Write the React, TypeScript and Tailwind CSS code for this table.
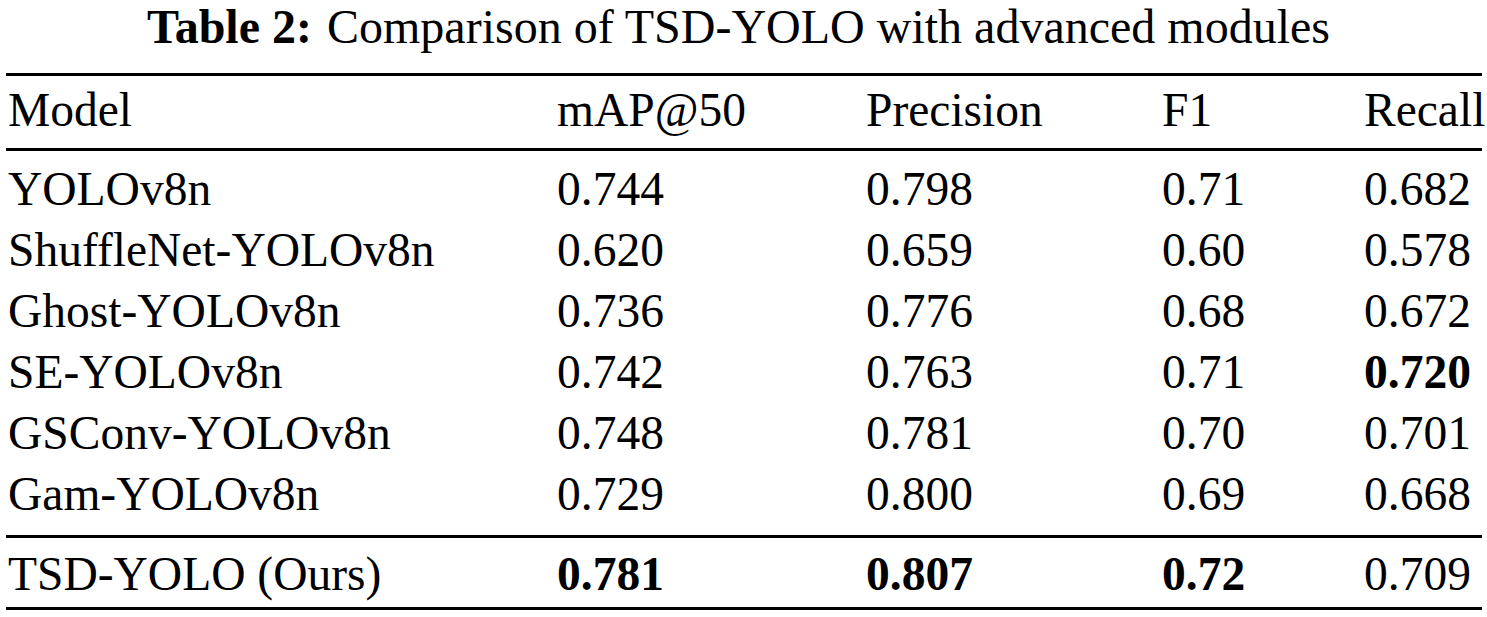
import React from 'react';

type Cell = { v: string; b?: boolean };

const HEAD = ['Model', 'mAP@50', 'Precision', 'F1', 'Recall'];

const ROWS: Cell[][] = [
  [{ v: 'YOLOv8n' }, { v: '0.744' }, { v: '0.798' }, { v: '0.71' }, { v: '0.682' }],
  [{ v: 'ShuffleNet-YOLOv8n' }, { v: '0.620' }, { v: '0.659' }, { v: '0.60' }, { v: '0.578' }],
  [{ v: 'Ghost-YOLOv8n' }, { v: '0.736' }, { v: '0.776' }, { v: '0.68' }, { v: '0.672' }],
  [{ v: 'SE-YOLOv8n' }, { v: '0.742' }, { v: '0.763' }, { v: '0.71' }, { v: '0.720', b: true }],
  [{ v: 'GSConv-YOLOv8n' }, { v: '0.748' }, { v: '0.781' }, { v: '0.70' }, { v: '0.701' }],
  [{ v: 'Gam-YOLOv8n' }, { v: '0.729' }, { v: '0.800' }, { v: '0.69' }, { v: '0.668' }],
];

const OURS: Cell[] = [
  { v: 'TSD-YOLO (Ours)' },
  { v: '0.781', b: true },
  { v: '0.807', b: true },
  { v: '0.72', b: true },
  { v: '0.709' },
];

const Row = ({ cells }: { cells: Cell[] }) => (
  <div className="grid grid-cols-[549px_309px_296px_202px_1fr] h-[61px] leading-[61px]">
    {cells.map((c, i) => (
      <div key={i} className={`pl-[2px] whitespace-nowrap ${c.b ? 'font-bold' : 'font-normal'}`}>
        {c.v}
      </div>
    ))}
  </div>
);

export default function App() {
  return (
    <div className="w-[1487px] h-[617px] bg-white text-black overflow-hidden text-[47.5px] font-['Liberation_Serif','Times_New_Roman',serif] [font-variant-ligatures:none]">
      <div className="h-[54px] leading-[54px] pr-[10px] text-[48px] text-center whitespace-nowrap">
        <span className="font-bold">Table 2:</span>
        <span className="ml-[15px]">Comparison of TSD-YOLO with advanced modules</span>
      </div>

      <div className="mt-[19px] ml-[6px] w-[1476px]">
        <div className="border-t-[3px] border-black pt-1">
          <Row cells={HEAD.map((v) => ({ v }))} />
        </div>
        <div className="mt-[7px] border-t-[3px] border-black pt-2">
          {ROWS.map((r, i) => (
            <Row key={i} cells={r} />
          ))}
        </div>
        <div className="mt-[10px] border-t-[3px] border-black pt-[6px]">
          <Row cells={OURS} />
        </div>
        <div className="mt-[2px] border-t-[3px] border-black" />
      </div>
    </div>
  );
}
